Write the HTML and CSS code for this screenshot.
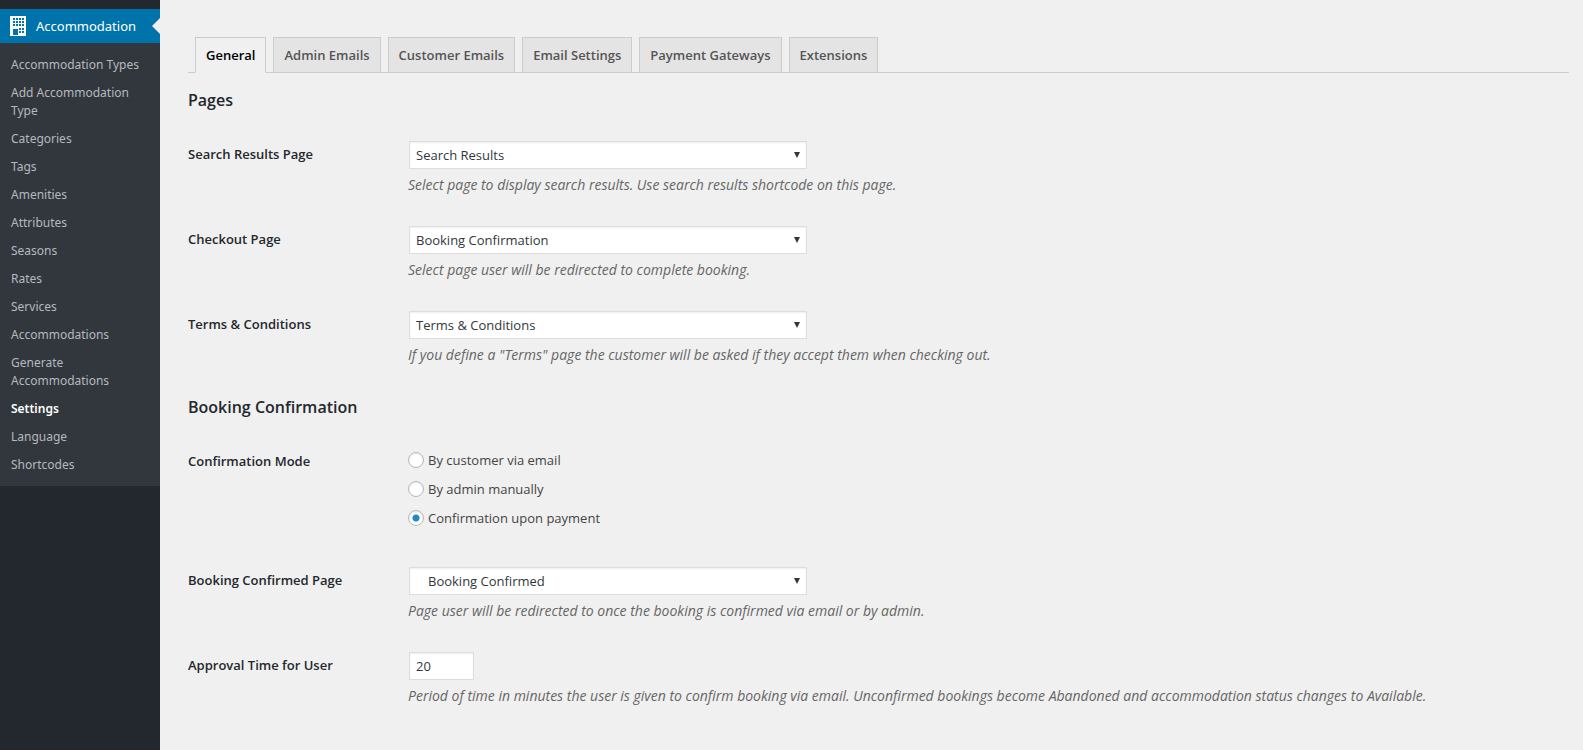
FILE: index.html
```html
<!DOCTYPE html>
<html lang="en">
<head>
<meta charset="utf-8">
<title>Accommodation Settings</title>
<link rel="stylesheet" href="styles.css">
</head>
<body>
<div class="admin">
  <nav class="sidebar" aria-label="Main menu">
    <a class="menu-head" href="#">
      <svg class="menu-icon" width="16" height="20" viewBox="0 0 16 20" aria-hidden="true">
        <path fill="#fff" fill-rule="evenodd" d="M0 0H16V20H0ZM3 2V4H5V2ZM6 2V4H8V2ZM9 2V4H11V2ZM12 2V4H14V2ZM3 5V7H5V5ZM6 5V7H8V5ZM9 5V7H11V5ZM12 5V7H14V5ZM3 8V10H5V8ZM6 8V10H8V8ZM9 8V10H11V8ZM12 8V10H14V8ZM3 13V19H8V13ZM9 12V14H11V12ZM12 12V14H14V12ZM9 15V17H11V15ZM12 15V17H14V15Z"/>
      </svg>
      <span>Accommodation</span>
    </a>
    <ul class="submenu">
      <li><a href="#">Accommodation Types</a></li>
      <li><a href="#">Add Accommodation Type</a></li>
      <li><a href="#">Categories</a></li>
      <li><a href="#">Tags</a></li>
      <li><a href="#">Amenities</a></li>
      <li><a href="#">Attributes</a></li>
      <li><a href="#">Seasons</a></li>
      <li><a href="#">Rates</a></li>
      <li><a href="#">Services</a></li>
      <li><a href="#">Accommodations</a></li>
      <li><a href="#">Generate Accommodations</a></li>
      <li><a class="current" href="#" aria-current="page">Settings</a></li>
      <li><a href="#">Language</a></li>
      <li><a href="#">Shortcodes</a></li>
    </ul>
  </nav>
  <main class="content">
    <nav class="tabs" aria-label="Settings sections">
      <a class="tab active" href="#">General</a>
      <a class="tab" href="#">Admin Emails</a>
      <a class="tab" href="#">Customer Emails</a>
      <a class="tab" href="#">Email Settings</a>
      <a class="tab" href="#">Payment Gateways</a>
      <a class="tab" href="#">Extensions</a>
    </nav>
    <form>
      <h2 class="section-title">Pages</h2>
      <div class="row">
        <label class="row-label" for="search-page">Search Results Page</label>
        <div class="field">
          <div class="select-box"><select class="control" id="search-page"><option>Search Results</option></select></div>
          <p class="description">Select page to display search results. Use search results shortcode on this page.</p>
        </div>
      </div>
      <div class="row">
        <label class="row-label" for="checkout-page">Checkout Page</label>
        <div class="field">
          <div class="select-box"><select class="control" id="checkout-page"><option>Booking Confirmation</option></select></div>
          <p class="description">Select page user will be redirected to complete booking.</p>
        </div>
      </div>
      <div class="row">
        <label class="row-label" for="terms-page">Terms &amp; Conditions</label>
        <div class="field">
          <div class="select-box"><select class="control" id="terms-page"><option>Terms &amp; Conditions</option></select></div>
          <p class="description">If you define a "Terms" page the customer will be asked if they accept them when checking out.</p>
        </div>
      </div>
      <h2 class="section-title">Booking Confirmation</h2>
      <div class="row row-radios" role="radiogroup" aria-labelledby="mode-label">
        <span class="row-label" id="mode-label">Confirmation Mode</span>
        <div class="radios">
          <label class="radio"><input type="radio" name="mode">By customer via email</label>
          <label class="radio"><input type="radio" name="mode">By admin manually</label>
          <label class="radio"><input type="radio" name="mode" checked>Confirmation upon payment</label>
        </div>
      </div>
      <div class="row">
        <label class="row-label" for="confirmed-page">Booking Confirmed Page</label>
        <div class="field">
          <div class="select-box"><select class="control nested" id="confirmed-page"><option>Booking Confirmed</option></select></div>
          <p class="description">Page user will be redirected to once the booking is confirmed via email or by admin.</p>
        </div>
      </div>
      <div class="row">
        <label class="row-label" for="approval-time">Approval Time for User</label>
        <div class="field">
          <input class="control number" id="approval-time" type="text" inputmode="numeric" value="20">
          <p class="description">Period of time in minutes the user is given to confirm booking via email. Unconfirmed bookings become Abandoned and accommodation status changes to Available.</p>
        </div>
      </div>
    </form>
  </main>
</div>
</body>
</html>
```
FILE: styles.css
```css
* { box-sizing: border-box; }
body {
  margin: 0;
  background: #f0f0f0;
  color: #444;
  font: 13px/20px "Open Sans", "Noto Sans", sans-serif;
}
.admin { display: flex; min-height: 100vh; }

.sidebar {
  flex: 0 0 160px;
  padding-top: 9px;
  background: #23282f;
  font-family: "Noto Sans", "Open Sans", sans-serif;
  font-size: 12px;
  line-height: 18px;
}
.sidebar a { color: #b4b9be; text-decoration: none; }
.sidebar .menu-head {
  position: relative;
  display: flex;
  align-items: center;
  gap: 10px;
  height: 34px;
  padding-left: 10px;
  background: #0073aa;
  color: #fff;
  font-size: 13px;
}
.menu-head::after {
  content: "";
  position: absolute;
  top: 9px;
  right: 0;
  border: 8px solid transparent;
  border-left: 0;
  border-right-color: #f0f0f0;
}
.submenu {
  margin: 0;
  padding: 8px 0 7px;
  list-style: none;
  background: #32373e;
}
.submenu a { display: block; padding: 5px 11px; }
.submenu .current { color: #fff; font-weight: 600; }

.content { flex: 1; min-width: 0; padding: 37px 14px 20px 28px; }
.tabs {
  display: flex;
  gap: 7px;
  padding-left: 7px;
  border-bottom: 1px solid #ccc;
}
.tab {
  margin-bottom: -1px;
  padding: 7px 10px;
  border: 1px solid #ccc;
  background: #e4e4e4;
  color: #555;
  font-weight: 600;
  line-height: 20px;
  text-decoration: none;
}
.tab.active { border-bottom-color: #f0f0f0; background: #f0f0f0; color: #000; }

.section-title {
  margin: 0;
  padding: 15px 0 13px;
  color: #23282d;
  font-size: 16px;
  font-weight: 600;
  line-height: 24px;
}
.row {
  display: grid;
  grid-template-columns: 220px 1fr;
  padding: 16px 0 15px;
}
.row-label { padding-top: 3px; color: #23282d; font-weight: 600; }
.select-box { position: relative; width: 400px; max-width: 100%; padding: 0 1px; }
.select-box::after {
  content: "";
  position: absolute;
  top: 11px;
  right: 8px;
  width: 6px;
  height: 6px;
  background: #32373c;
  clip-path: polygon(0 0, 100% 0, 50% 100%);
  pointer-events: none;
}
.control {
  display: block;
  width: 100%;
  height: 28px;
  margin: 0;
  padding: 0 6px;
  border: 1px solid #ddd;
  border-radius: 0;
  background: #fff;
  box-shadow: inset 0 1px 2px rgba(0, 0, 0, 0.07);
  color: #32373c;
  font: inherit;
  appearance: none;
}
.control.nested { padding-left: 18px; }
.control.number { width: 65px; margin-left: 1px; }
.description {
  margin: 6px 0 0;
  color: #666;
  font-size: 14px;
  font-style: italic;
}

.row-radios { padding-bottom: 21px; }
.radios { display: grid; gap: 5px; }
.radio { display: flex; align-items: center; gap: 4px; line-height: 24px; }
.radio input {
  width: 16px;
  height: 16px;
  margin: 0;
  border: 1px solid #b4b9be;
  border-radius: 50%;
  background: #fff;
  box-shadow: inset 0 1px 2px rgba(0, 0, 0, 0.1);
  appearance: none;
}
.radio input:checked { background: radial-gradient(circle, #1e8cbe 0 3px, #fff 4px); }
```
